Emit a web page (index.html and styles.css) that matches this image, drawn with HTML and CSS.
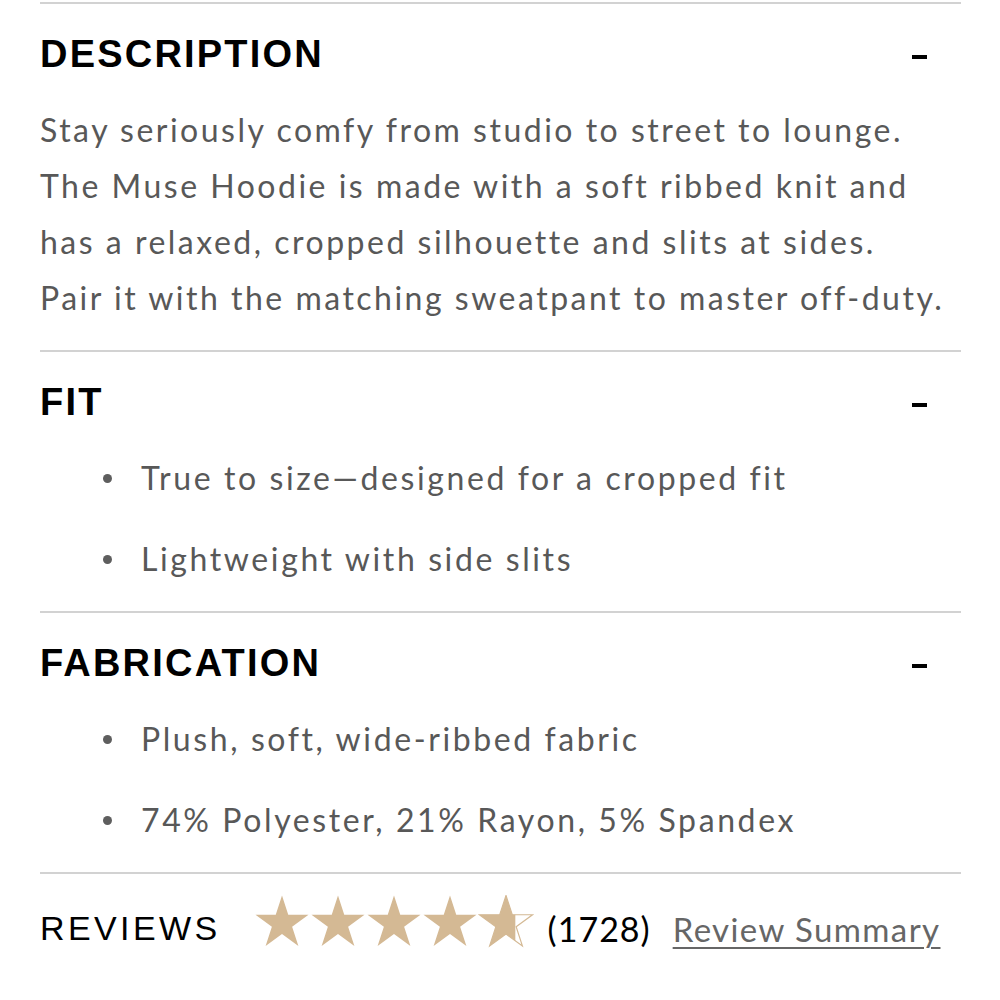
FILE: index.html
```html
<!DOCTYPE html>
<html lang="en">
<head>
<meta charset="utf-8">
<title>Product details</title>
<link rel="stylesheet" href="styles.css">
</head>
<body>
<div class="details">
  <section class="panel">
    <div class="panel-head">
      <h2 class="panel-title">DESCRIPTION</h2>
      <span class="toggle" aria-label="collapse"></span>
    </div>
    <p class="panel-text">Stay seriously comfy from studio to street to lounge. The Muse Hoodie is made with a soft ribbed knit and has a relaxed, cropped silhouette and slits at sides. Pair&nbsp;it with the matching sweatpant to master off-duty.</p>
  </section>
  <section class="panel">
    <div class="panel-head">
      <h2 class="panel-title">FIT</h2>
      <span class="toggle" aria-label="collapse"></span>
    </div>
    <ul class="panel-list">
      <li>True to size—designed for a cropped fit</li>
      <li>Lightweight with side slits</li>
    </ul>
  </section>
  <section class="panel">
    <div class="panel-head">
      <h2 class="panel-title">FABRICATION</h2>
      <span class="toggle" aria-label="collapse"></span>
    </div>
    <ul class="panel-list">
      <li>Plush, soft, wide-ribbed fabric</li>
      <li>74% Polyester, 21% Rayon, 5% Spandex</li>
    </ul>
  </section>
  <section class="panel reviews">
    <h2 class="reviews-title">REVIEWS</h2>
    <div class="stars" aria-label="4.7 out of 5 stars">
      <svg class="star" viewBox="0 0 57 54"><polygon points="28.5,0.5 34.88,20.12 55.51,20.12 38.82,32.25 45.19,51.88 28.5,39.75 11.81,51.88 18.18,32.25 1.49,20.12 22.12,20.12"/></svg>
      <svg class="star" viewBox="0 0 57 54"><polygon points="28.5,0.5 34.88,20.12 55.51,20.12 38.82,32.25 45.19,51.88 28.5,39.75 11.81,51.88 18.18,32.25 1.49,20.12 22.12,20.12"/></svg>
      <svg class="star" viewBox="0 0 57 54"><polygon points="28.5,0.5 34.88,20.12 55.51,20.12 38.82,32.25 45.19,51.88 28.5,39.75 11.81,51.88 18.18,32.25 1.49,20.12 22.12,20.12"/></svg>
      <svg class="star" viewBox="0 0 57 54"><polygon points="28.5,0.5 34.88,20.12 55.51,20.12 38.82,32.25 45.19,51.88 28.5,39.75 11.81,51.88 18.18,32.25 1.49,20.12 22.12,20.12"/></svg>
      <svg class="star" viewBox="0 0 57 54">
        <defs><clipPath id="partial"><rect x="0" y="0" width="38" height="54"/></clipPath></defs>
        <polygon class="star-outline" points="28.5,0.5 34.88,20.12 55.51,20.12 38.82,32.25 45.19,51.88 28.5,39.75 11.81,51.88 18.18,32.25 1.49,20.12 22.12,20.12"/>
        <polygon clip-path="url(#partial)" points="28.5,0.5 34.88,20.12 55.51,20.12 38.82,32.25 45.19,51.88 28.5,39.75 11.81,51.88 18.18,32.25 1.49,20.12 22.12,20.12"/>
      </svg>
    </div>
    <span class="review-count">(1728)</span>
    <a class="review-link" href="#">Review Summary</a>
  </section>
</div>
</body>
</html>
```

FILE: styles.css
```css
* { box-sizing: border-box; }
html, body { margin: 0; padding: 0; background: #fff; }
body { font-family: Lato, "Liberation Sans", sans-serif; }

.details {
  margin: 2px 39px 0 40px;
}

.panel {
  border-top: 2px solid #d2d2d2;
  padding: 27px 0 24px;
}

.panel-head {
  display: flex;
  align-items: center;
  justify-content: space-between;
  height: 46px;
}
.panel-title {
  margin: 0;
  font-family: "Liberation Sans", Arial, sans-serif;
  font-weight: 700;
  font-size: 38px;
  letter-spacing: 2.2px;
  color: #000;
}
.toggle {
  display: block;
  width: 15px;
  height: 4px;
  margin-top: 5px;
  background: #000;
  margin-right: 34px;
}

.panel-text {
  margin: 25px 0 0;
  font-size: 32px;
  line-height: 56px;
  letter-spacing: 2.5px;
  color: #585858;
}

.panel-list {
  list-style: none;
  margin: 25px 0 0;
  padding: 0 0 0 63px;
  display: flex;
  flex-direction: column;
  gap: 25px;
  font-size: 32px;
  line-height: 56px;
  letter-spacing: 2.6px;
  color: #585858;
}
.panel-list li {
  display: flex;
  align-items: center;
  gap: 29px;
}
.panel-list li::before {
  content: "";
  flex: 0 0 9px;
  width: 9px;
  height: 9px;
  border-radius: 50%;
  background: #5e5e5e;
}

.reviews {
  display: flex;
  align-items: center;
  padding: 34px 0 20px;
}
.reviews-title {
  margin: 0;
  font-weight: 400;
  font-family: "Liberation Sans", Arial, sans-serif;
  font-size: 34px;
  letter-spacing: 3.4px;
  color: #000;
}
.stars {
  display: flex;
  margin-left: 33px;
  margin-top: -14px;
}
.star {
  display: block;
  width: 56px;
  height: 53px;
  fill: #d4b994;
}
.star-outline {
  fill: none;
  stroke: #d4b994;
  stroke-width: 1.2;
}
.review-count {
  margin-left: 14px;
  font-size: 34px;
  letter-spacing: 1px;
  color: #000;
}
.review-link {
  margin-left: 22px;
  font-size: 33px;
  letter-spacing: 1.4px;
  color: #666;
  text-decoration: underline;
  text-underline-offset: 5px;
  text-decoration-thickness: 2px;
}
```
